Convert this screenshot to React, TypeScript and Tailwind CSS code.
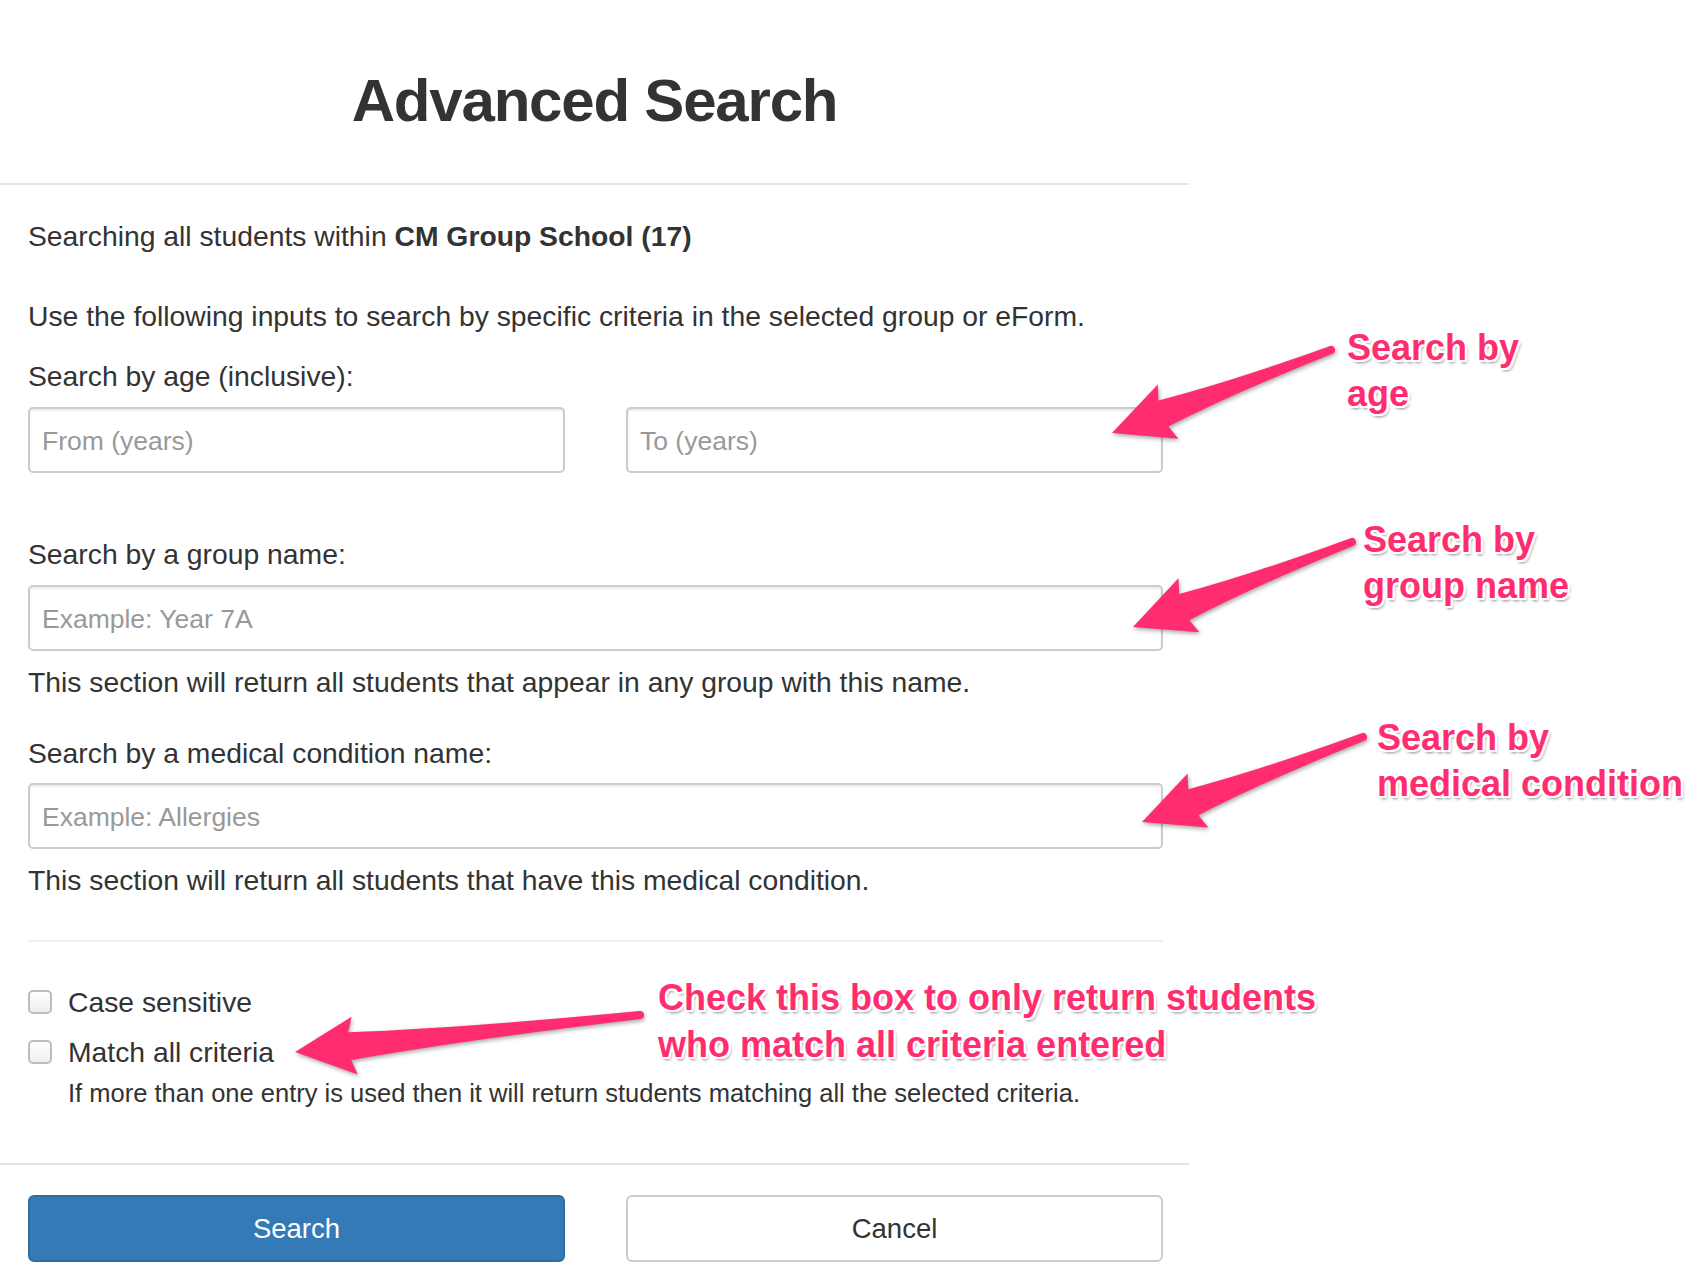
import React from "react";

type Pt = [number, number];

function Arrow({ tail, tip }: { tail: Pt; tip: Pt }) {
  const dx = tip[0] - tail[0];
  const dy = tip[1] - tail[1];
  const L = Math.hypot(dx, dy);
  const ang = (Math.atan2(dy, dx) * 180) / Math.PI;
  const h = L - 55;
  const b = L - 60;
  const d = `M 0 -4 Q ${h * 0.6} -6 ${h} -14 L ${b} -29 L ${L} 0 L ${b} 29 L ${h} 14 Q ${h * 0.6} 6 0 4 A 4 4 0 0 1 0 -4 Z`;
  return (
    <g transform={`translate(${tail[0]} ${tail[1]}) rotate(${ang})`}>
      <path d={d} fill="#ff2d6f" />
    </g>
  );
}

const note =
  "absolute whitespace-nowrap text-[36px] font-bold leading-[46px] text-[#ff2d6f] [text-shadow:-2px_-2px_0_#fff,2px_-2px_0_#fff,-2px_2px_0_#fff,2px_2px_0_#fff,0_-2px_0_#fff,0_2px_0_#fff,-2px_0_0_#fff,2px_0_0_#fff,2px_3px_3px_rgba(0,0,0,0.45)]";

const inputCls =
  "block h-[66px] w-full rounded-[5px] border-2 border-[#ccc] bg-white px-[12px] pt-[3px] text-[26.5px] shadow-[inset_0_2px_2px_rgba(0,0,0,0.075)] outline-none placeholder:text-[#999]";

function Check({ label }: { label: string }) {
  return (
    <label className="flex h-[40px] items-center">
      <span className="h-[24px] w-[24px] rounded-[5px] border-2 border-[#bdbdbd] bg-gradient-to-b from-white to-[#eeeeee]" />
      <span className="ml-[16px]">{label}</span>
    </label>
  );
}

export default function App() {
  return (
    <div className="relative h-[1284px] w-[1698px] overflow-hidden bg-white font-['Liberation_Sans',Arial,sans-serif] text-[#333]">
      <div className="w-[1189px]">
        <div className="h-[185px] border-b-2 border-[#e5e5e5] pt-[71px]">
          <h1 className="text-center text-[60px] font-bold leading-[60px] tracking-[-1.2px]">
            Advanced Search
          </h1>
        </div>
        <div className="h-[978px] pl-[28px] pr-[26px] text-[28.3px] leading-[40px]">
          <p className="pt-[31px]">
            Searching all students within <b>CM Group School (17)</b>
          </p>
          <p className="mt-[40px]">
            Use the following inputs to search by specific criteria in the selected group or eForm.
          </p>
          <p className="mt-[20px]">Search by age (inclusive):</p>
          <div className="mt-[11px] grid grid-cols-2 gap-[61px]">
            <input className={inputCls} placeholder="From (years)" />
            <input className={inputCls} placeholder="To (years)" />
          </div>
          <p className="mt-[61px]">Search by a group name:</p>
          <div className="mt-[11px]">
            <input className={inputCls} placeholder="Example: Year 7A" />
          </div>
          <p className="mt-[11px]">
            This section will return all students that appear in any group with this name.
          </p>
          <p className="mt-[31px]">Search by a medical condition name:</p>
          <div className="mt-[10px]">
            <input className={inputCls} placeholder="Example: Allergies" />
          </div>
          <p className="mt-[11px]">
            This section will return all students that have this medical condition.
          </p>
          <div className="mt-[40px] h-[2px] bg-[#eeeeee]" />
          <div className="mt-[40px]">
            <Check label="Case sensitive" />
          </div>
          <div className="mt-[10px]">
            <Check label="Match all criteria" />
          </div>
          <p className="mt-[3px] pl-[40px] text-[25.5px] leading-[36px]">
            If more than one entry is used then it will return students matching all the selected criteria.
          </p>
        </div>
        <div className="border-t-2 border-[#e5e5e5] pl-[28px] pr-[26px] pt-[30px]">
          <div className="grid grid-cols-2 gap-[61px] text-[27.5px]">
            <button className="h-[67px] rounded-[6px] border-2 border-[#2e6da4] bg-[#337ab7] text-white">
              Search
            </button>
            <button className="h-[67px] rounded-[6px] border-2 border-[#ccc] bg-white text-[#333]">
              Cancel
            </button>
          </div>
        </div>
      </div>

      <svg
        className="pointer-events-none absolute left-0 top-0 [filter:drop-shadow(1px_2px_2px_rgba(0,0,0,0.35))]"
        width={1698}
        height={1284}
      >
        <Arrow tail={[1331, 350]} tip={[1112, 433]} />
        <Arrow tail={[1352, 542]} tip={[1133, 627]} />
        <Arrow tail={[1363, 737]} tip={[1142, 822]} />
        <Arrow tail={[640, 1015]} tip={[295, 1052]} />
      </svg>

      <div className={`${note} left-[1347px] top-[325px]`}>
        Search by
        <br />
        age
      </div>
      <div className={`${note} left-[1363px] top-[517px]`}>
        Search by
        <br />
        group name
      </div>
      <div className={`${note} left-[1377px] top-[715px]`}>
        Search by
        <br />
        medical condition
      </div>
      <div className={`${note} left-[658px] top-[974px] leading-[47px]`}>
        Check this box to only return students
        <br />
        who match all criteria entered
      </div>
    </div>
  );
}
